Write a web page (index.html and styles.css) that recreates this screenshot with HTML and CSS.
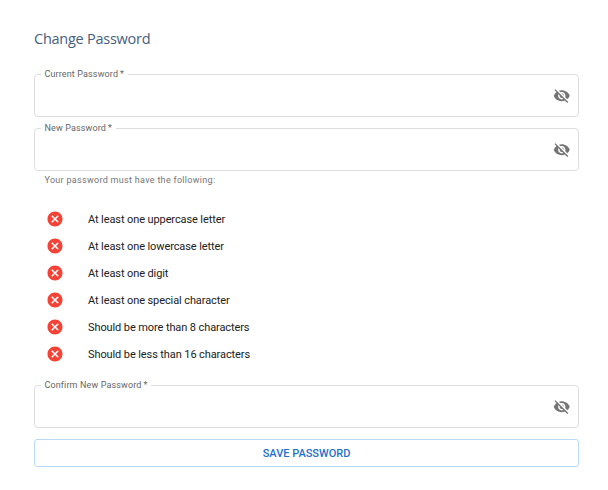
FILE: index.html
```
<!DOCTYPE html>
<html lang="en">
<head>
<meta charset="utf-8">
<title>Change Password</title>
<link rel="stylesheet" href="styles.css">
</head>
<body>
<svg class="defs" width="0" height="0">
  <symbol id="eye-off" viewBox="0 0 24 24"><path d="M12 7c2.76 0 5 2.24 5 5 0 .65-.13 1.26-.36 1.83l2.92 2.92c1.51-1.26 2.7-2.89 3.43-4.75-1.73-4.39-6-7.5-11-7.5-1.4 0-2.74.25-3.98.7l2.16 2.16C10.74 7.13 11.35 7 12 7zM2 4.27l2.28 2.28.46.46C3.08 8.3 1.78 10.02 1 12c1.73 4.39 6 7.5 11 7.5 1.55 0 3.03-.3 4.38-.84l.42.42L19.73 22 21 20.73 3.27 3 2 4.27zM7.53 9.8l1.55 1.55c-.05.21-.08.43-.08.65 0 1.66 1.34 3 3 3 .22 0 .44-.03.65-.08l1.55 1.55c-.67.33-1.41.53-2.2.53-2.76 0-5-2.24-5-5 0-.79.2-1.53.53-2.2zm4.31-.78l3.15 3.15.02-.16c0-1.66-1.34-3-3-3l-.17.01z"/></symbol>
  <symbol id="cancel" viewBox="0 0 24 24"><path d="M12 2C6.47 2 2 6.47 2 12s4.47 10 10 10 10-4.47 10-10S17.53 2 12 2zm5 13.59L15.59 17 12 13.41 8.41 17 7 15.59 10.59 12 7 8.41 8.41 7 12 10.59 15.59 7 17 8.41 13.41 12 17 15.59z"/></symbol>
</svg>
<main class="form">
  <h1 class="title">Change Password</h1>
  <div class="field"><span class="label current">Current Password<span class="star">*</span></span><svg class="eye"><use href="#eye-off"/></svg></div>
  <div class="field"><span class="label new">New Password<span class="star">*</span></span><svg class="eye"><use href="#eye-off"/></svg></div>
  <p class="hint">Your password must have the following:</p>
  <ul class="rules">
    <li><svg class="cross"><use href="#cancel"/></svg><span>At least one uppercase letter</span></li>
    <li><svg class="cross"><use href="#cancel"/></svg><span>At least one lowercase letter</span></li>
    <li><svg class="cross"><use href="#cancel"/></svg><span>At least one digit</span></li>
    <li><svg class="cross"><use href="#cancel"/></svg><span>At least one special character</span></li>
    <li><svg class="cross"><use href="#cancel"/></svg><span>Should be more than 8 characters</span></li>
    <li><svg class="cross"><use href="#cancel"/></svg><span>Should be less than 16 characters</span></li>
  </ul>
  <div class="field"><span class="label confirm">Confirm New Password<span class="star">*</span></span><svg class="eye"><use href="#eye-off"/></svg></div>
  <button class="save">SAVE PASSWORD</button>
</main>
</body>
</html>
```
FILE: styles.css
```
* { box-sizing: border-box; }
body { margin: 0; background: #fff; font-family: Roboto, sans-serif; }
.defs { position: absolute; }
.form { width: 545px; margin-left: 34px; padding-top: 29px; }
.title {
  margin: 0 0 25px;
  font: 400 14.5px/20px "Open Sans", sans-serif;
  letter-spacing: -0.25px;
  color: #48607e;
}
.field {
  position: relative;
  display: flex;
  align-items: center;
  justify-content: flex-end;
  height: 43px;
  margin-bottom: 11px;
  padding-right: 7.5px;
  border: 1px solid #dedede;
  border-radius: 4px;
}
.label {
  position: absolute;
  left: 6px;
  top: -7px;
  padding-left: 3.5px;
  background: #fff;
  font-size: 9px;
  line-height: 12px;
  letter-spacing: 0.13px;
  white-space: nowrap;
  color: #666;
}
.star { margin-left: 2px; }
.current { width: 87px; }
.new { width: 75px; }
.confirm { width: 110px; }
.eye { width: 17.5px; height: 17.5px; fill: #757575; }
.hint {
  margin: -9px 0 19px 10.5px;
  font-size: 9px;
  line-height: 14px;
  letter-spacing: 0.3px;
  color: #757575;
}
.rules { margin: 0 0 17px; padding: 0; list-style: none; }
.rules li {
  display: flex;
  align-items: center;
  gap: 24px;
  height: 27px;
  padding: 0 0 1px 12px;
  font-size: 11px;
  letter-spacing: -0.1px;
  color: #212121;
}
.cross { width: 18px; height: 18px; fill: #f44336; }
.save {
  display: block;
  width: 100%;
  height: 28px;
  padding: 1px 0 0;
  border: 1px solid #bbdaf5;
  border-radius: 3px;
  background: #fff;
  font: 500 11px/25px Roboto, sans-serif;
  letter-spacing: 0;
  color: #1f70c9;
}
```
